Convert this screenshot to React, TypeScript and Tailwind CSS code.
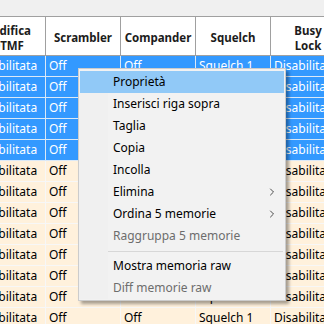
import { ChevronRight } from 'lucide-react'

type Row = { dtmf: string; scrambler: string; compander: string; squelch: string; busy: string; selected: boolean }

const rows: Row[] = Array.from({ length: 13 }, (_, i) => ({
  dtmf: 'Disabilitata',
  scrambler: 'Off',
  compander: 'Off',
  squelch: 'Squelch 1',
  busy: 'Disabilitata',
  selected: i < 5,
}))

const headers = [['Codifica', 'DTMF'], ['Scrambler'], ['Compander'], ['Squelch'], ['Busy', 'Lock']]

type Item = { label: string; disabled?: boolean; sub?: boolean; active?: boolean; sep?: boolean }

const menu: Item[] = [
  { label: 'Proprietà', active: true },
  { label: 'Inserisci riga sopra' },
  { label: 'Taglia' },
  { label: 'Copia' },
  { label: 'Incolla' },
  { label: 'Elimina', sub: true },
  { label: 'Ordina 5 memorie', sub: true },
  { label: 'Raggruppa 5 memorie', disabled: true },
  { label: '', sep: true },
  { label: 'Mostra memoria raw' },
  { label: 'Diff memorie raw', disabled: true },
]

export default function App() {
  return (
    <div
      className="relative w-[324px] h-[324px] overflow-hidden bg-[#f0f0f0] text-[12px] text-black"
      style={{ fontFamily: '"Noto Sans", "Open Sans", sans-serif' }}
    >
      {/* toolbar strip */}
      <div className="h-[17px] bg-[#f0f0f0] border-b border-[#a0a0a0]" />

      {/* grid */}
      <div className="-ml-[29px] w-[400px]">
        <div className="flex h-[39px] bg-white border-b border-[#a0a0a0]">
          {headers.map((h, i) => (
            <div
              key={i}
              className="w-[75px] shrink-0 border-r border-[#a0a0a0] pt-[3px] flex flex-col items-center justify-center font-bold text-[11.5px] leading-[15px] text-[#1c1c1c]"
            >
              {h.map((l) => (
                <span key={l}>{l}</span>
              ))}
            </div>
          ))}
        </div>
        {rows.map((r, i) => (
          <div
            key={i}
            className={
              r.selected
                ? 'flex h-[21px] bg-[#3399ff] text-white border-b border-[#dbe9f7]'
                : 'flex h-[21px] bg-[#fff1dc] text-black border-b border-[#f7f7f7]'
            }
          >
            {[r.dtmf, r.scrambler, r.compander, r.squelch, r.busy].map((v, j) => (
              <div
                key={j}
                className={
                  r.selected
                    ? 'w-[75px] shrink-0 border-r border-[#dbe9f7] pl-[3px] flex items-center whitespace-nowrap overflow-hidden'
                    : 'w-[75px] shrink-0 border-r border-[#f7f7f7] pl-[3px] flex items-center whitespace-nowrap overflow-hidden'
                }
              >
                {v}
              </div>
            ))}
          </div>
        ))}
      </div>

      {/* context menu */}
      <div className="absolute left-[78px] top-[68px] w-[208px] border border-[#cccccc] bg-[#f2f2f2] pt-[2px] pb-[1px] shadow-[3px_3px_3px_rgba(0,0,0,0.35)]">
        <div className="relative">
          <div className="absolute left-0 top-0 bottom-0 w-[29px] bg-[#f0f0f0]" />
          {menu.map((m, i) =>
            m.sep ? (
              <div key={i} className="relative h-[8px] flex items-center pl-[29px] pr-[2px]">
                <div className="h-px w-full bg-[#d7d7d7]" />
              </div>
            ) : (
              <div
                key={i}
                className={
                  m.active
                    ? 'relative mx-[1px] h-[22px] bg-[#91c9f7] flex items-center pl-[33px] pr-[6px]'
                    : 'relative mx-[1px] h-[22px] flex items-center pl-[33px] pr-[6px]'
                }
              >
                <span className={m.disabled ? 'flex-1 text-[#6d6d6d]' : 'flex-1'}>{m.label}</span>
                {m.sub && <ChevronRight size={12} strokeWidth={1.6} className="text-[#222]" />}
              </div>
            ),
          )}
        </div>
      </div>
    </div>
  )
}
